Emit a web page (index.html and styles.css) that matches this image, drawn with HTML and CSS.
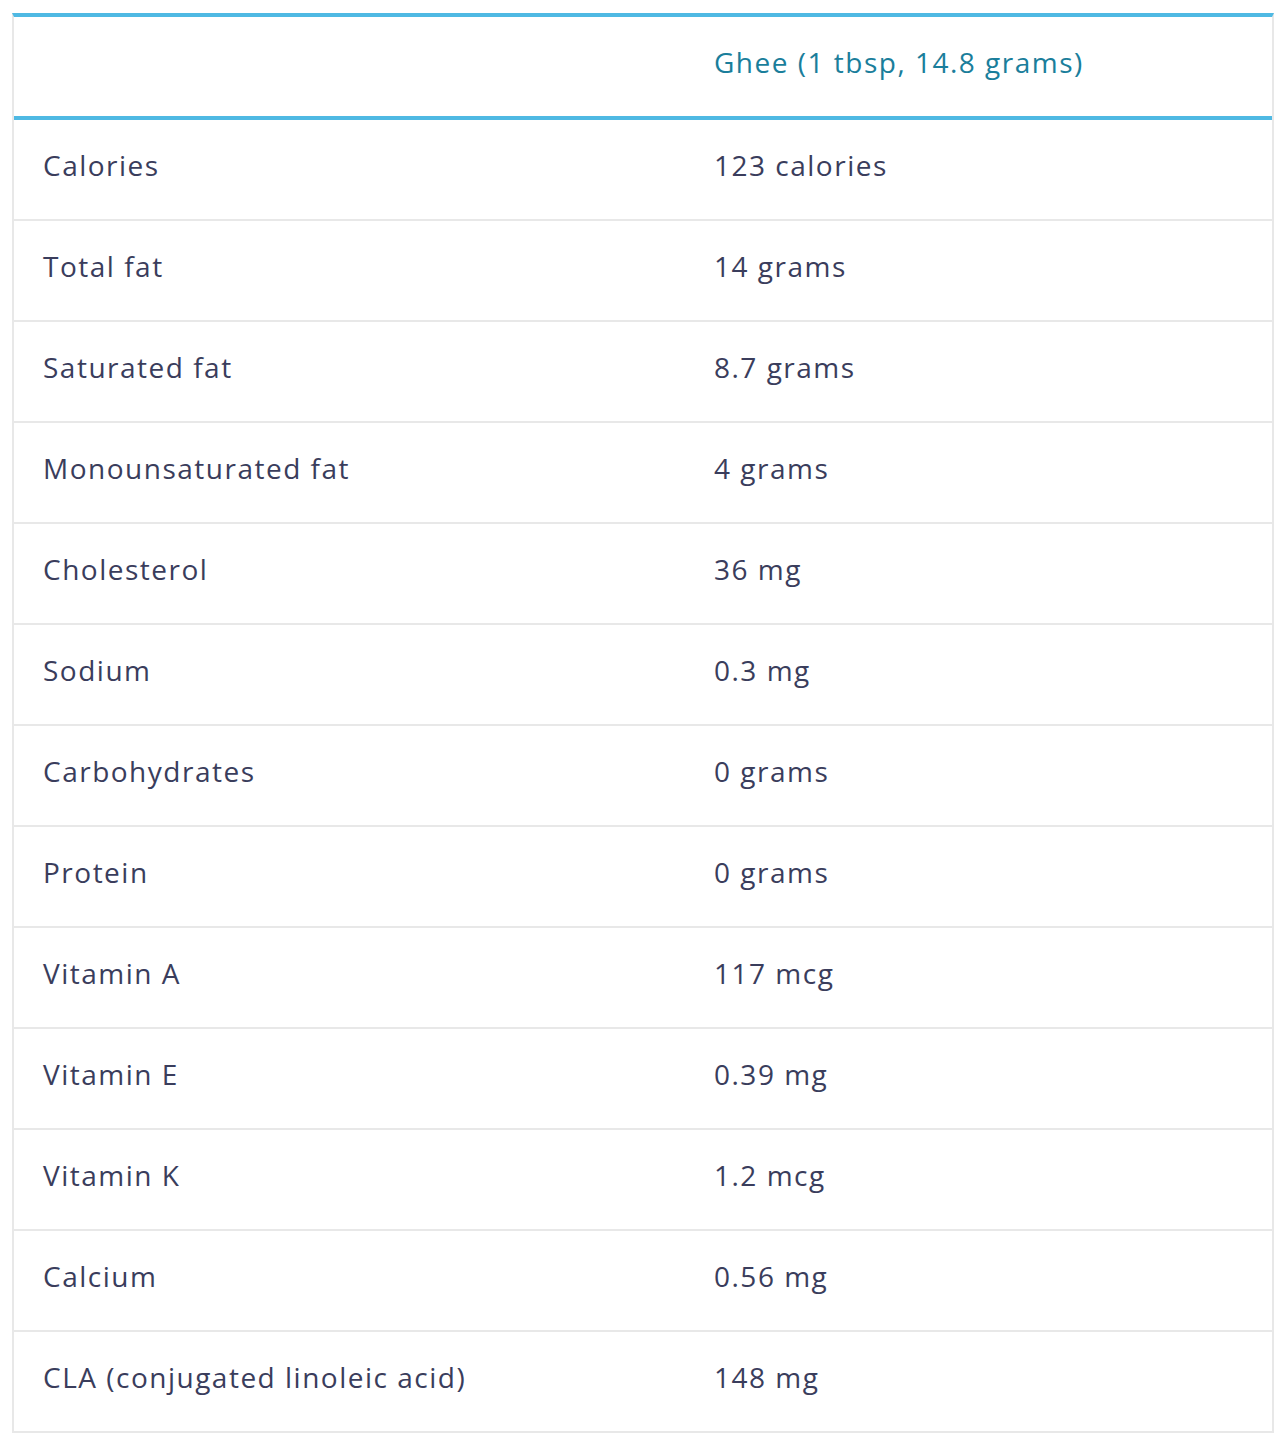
FILE: index.html
```html
<!DOCTYPE html>
<html lang="en">
<head>
<meta charset="utf-8">
<title>Ghee nutrition</title>
<link rel="stylesheet" href="styles.css">
</head>
<body>
<div class="page">
<table class="nutrition">
  <thead>
    <tr><th class="label"></th><th class="value">Ghee (1 tbsp, 14.8 grams)</th></tr>
  </thead>
  <tbody>
    <tr><td class="label">Calories</td><td class="value">123 calories</td></tr>
    <tr><td class="label">Total fat</td><td class="value">14 grams</td></tr>
    <tr><td class="label">Saturated fat</td><td class="value">8.7 grams</td></tr>
    <tr><td class="label">Monounsaturated fat</td><td class="value">4 grams</td></tr>
    <tr><td class="label">Cholesterol</td><td class="value">36 mg</td></tr>
    <tr><td class="label">Sodium</td><td class="value">0.3 mg</td></tr>
    <tr><td class="label">Carbohydrates</td><td class="value">0 grams</td></tr>
    <tr><td class="label">Protein</td><td class="value">0 grams</td></tr>
    <tr><td class="label">Vitamin A</td><td class="value">117 mcg</td></tr>
    <tr><td class="label">Vitamin E</td><td class="value">0.39 mg</td></tr>
    <tr><td class="label">Vitamin K</td><td class="value">1.2 mcg</td></tr>
    <tr><td class="label">Calcium</td><td class="value">0.56 mg</td></tr>
    <tr><td class="label">CLA (conjugated linoleic acid)</td><td class="value">148 mg</td></tr>
  </tbody>
</table>
</div>
</body>
</html>
```
FILE: styles.css
```css
html, body {
  margin: 0;
  padding: 0;
  background: #ffffff;
}
.page {
  padding: 13px 14px 0 12px;
  font-family: "Open Sans", "Noto Sans", sans-serif;
}
.nutrition {
  width: 1262px;
  border-collapse: separate;
  border-spacing: 0;
  border-top: 4px solid #4fb9e3;
  border-left: 2px solid #e8e8e8;
  border-right: 2px solid #e8e8e8;
  font-size: 28px;
  line-height: 36px;
  letter-spacing: 1.5px;
  color: #3a3d5c;
}
.nutrition th,
.nutrition td {
  box-sizing: border-box;
  padding: 0 0 9px 29px;
  text-align: left;
  vertical-align: middle;
  font-weight: 400;
}
.nutrition th {
  border-bottom: 4px solid #4fb9e3;
  color: #1a7e9b;
  height: 103px;
}
.nutrition td {
  border-bottom: 2px solid #e8e8e8;
  height: 101px;
}
.nutrition .label {
  width: 671px;
}
```
